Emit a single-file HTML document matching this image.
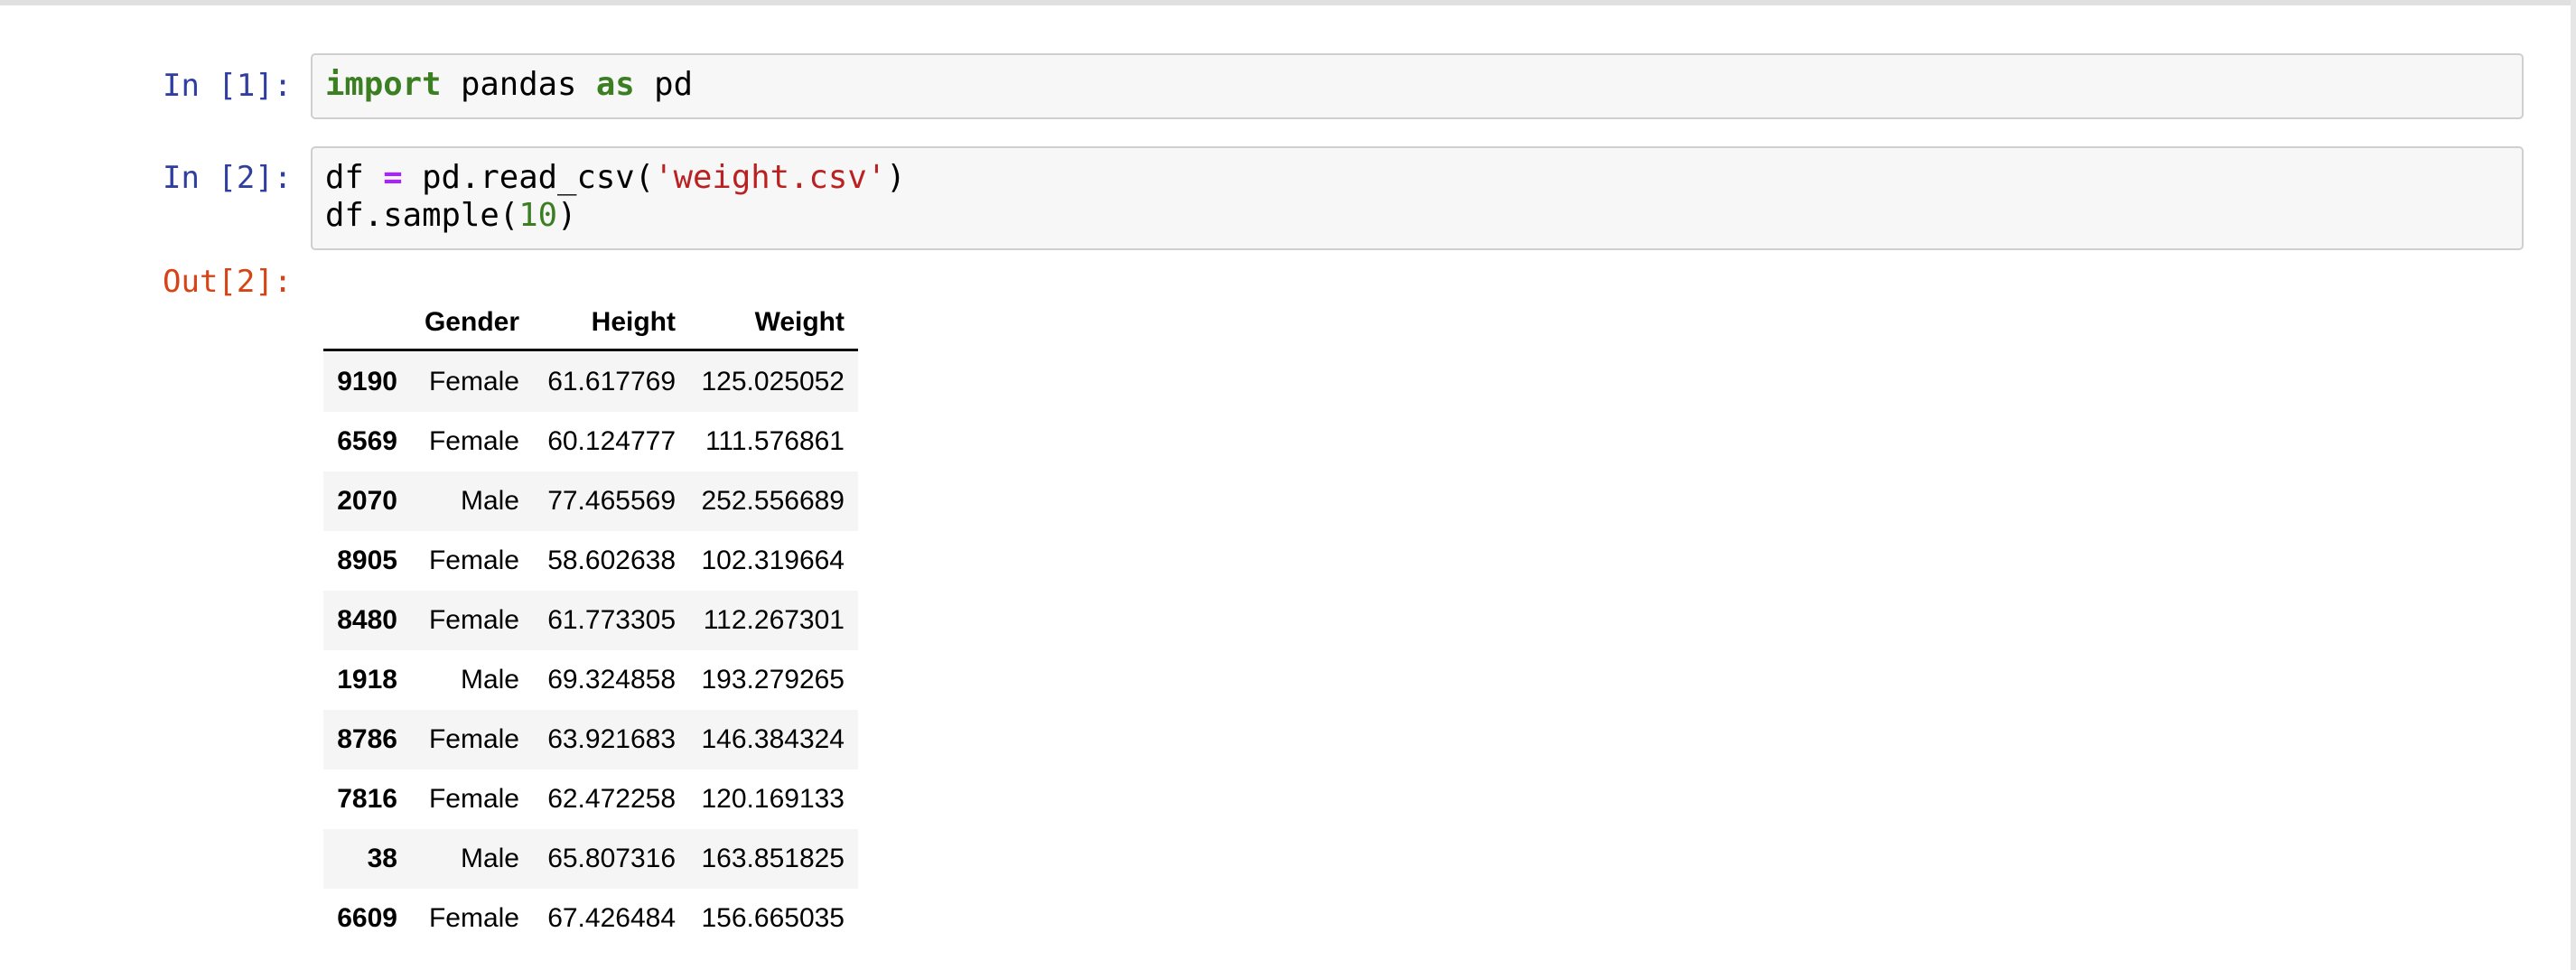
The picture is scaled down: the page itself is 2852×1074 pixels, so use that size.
<!DOCTYPE html>
<html><head><meta charset="utf-8"><style>
html,body{margin:0;padding:0;width:2852px;height:1074px;overflow:hidden;background:#fff;position:relative}
.topbar{position:absolute;left:0;top:0;width:2852px;height:6px;background:#e0e0e0}
.rbar{position:absolute;left:2846px;top:0;width:6px;height:1074px;background:#e6e6e6}
.mono{font-family:"DejaVu Sans Mono","Liberation Mono",monospace;font-size:34px;line-height:42px;white-space:pre}
.prompt{position:absolute;color:#303F9F}
.box{position:absolute;left:344px;width:2446px;background:#f7f7f7;border:2px solid #cfcfcf;border-radius:5px}
.code{position:absolute;left:14px;color:#000;font-size:35.6px}
.kw{color:#3b7f22;font-weight:bold}
.op{color:#AA22FF;font-weight:bold}
.str{color:#BA2121}
.num{color:#3b7f22}
.out{position:absolute;color:#D84315}
.t{font-family:"Liberation Sans",Arial,sans-serif;font-size:30px;color:#000}
.row{position:absolute;left:358px;width:592px;height:66px;line-height:66px}
.row span{position:absolute;top:0}
.c0{right:510px;font-weight:bold}.c1{right:375px}.c2{right:202px}.c3{right:15px}
.hdr span{font-weight:bold}
.line{position:absolute;left:358px;top:386px;width:592px;height:3px;background:#000}
</style></head><body>
<div class="topbar"></div><div class="rbar"></div>

<div class="prompt mono" style="left:180px;top:74px">In [1]:</div>
<div class="box" style="top:59px;height:69px">
  <div class="code mono" style="top:12px"><span class="kw">import</span> pandas <span class="kw">as</span> pd</div>
</div>

<div class="prompt mono" style="left:180px;top:176px">In [2]:</div>
<div class="box" style="top:162px;height:111px">
  <div class="code mono" style="top:12px">df <span class="op">=</span> pd.read_csv(<span class="str">'weight.csv'</span>)
df.sample(<span class="num">10</span>)</div>
</div>

<div class="out mono" style="left:180px;top:291px">Out[2]:</div>

<div class="row t hdr" style="top:324px"><span class="c1">Gender</span><span class="c2">Height</span><span class="c3">Weight</span></div>
<div class="line"></div>

<div class="row t" style="top:390px;background:#f5f5f5"><span class="c0">9190</span><span class="c1">Female</span><span class="c2">61.617769</span><span class="c3">125.025052</span></div>
<div class="row t" style="top:456px"><span class="c0">6569</span><span class="c1">Female</span><span class="c2">60.124777</span><span class="c3">111.576861</span></div>
<div class="row t" style="top:522px;background:#f5f5f5"><span class="c0">2070</span><span class="c1">Male</span><span class="c2">77.465569</span><span class="c3">252.556689</span></div>
<div class="row t" style="top:588px"><span class="c0">8905</span><span class="c1">Female</span><span class="c2">58.602638</span><span class="c3">102.319664</span></div>
<div class="row t" style="top:654px;background:#f5f5f5"><span class="c0">8480</span><span class="c1">Female</span><span class="c2">61.773305</span><span class="c3">112.267301</span></div>
<div class="row t" style="top:720px"><span class="c0">1918</span><span class="c1">Male</span><span class="c2">69.324858</span><span class="c3">193.279265</span></div>
<div class="row t" style="top:786px;background:#f5f5f5"><span class="c0">8786</span><span class="c1">Female</span><span class="c2">63.921683</span><span class="c3">146.384324</span></div>
<div class="row t" style="top:852px"><span class="c0">7816</span><span class="c1">Female</span><span class="c2">62.472258</span><span class="c3">120.169133</span></div>
<div class="row t" style="top:918px;background:#f5f5f5"><span class="c0">38</span><span class="c1">Male</span><span class="c2">65.807316</span><span class="c3">163.851825</span></div>
<div class="row t" style="top:984px"><span class="c0">6609</span><span class="c1">Female</span><span class="c2">67.426484</span><span class="c3">156.665035</span></div>
</body></html>
